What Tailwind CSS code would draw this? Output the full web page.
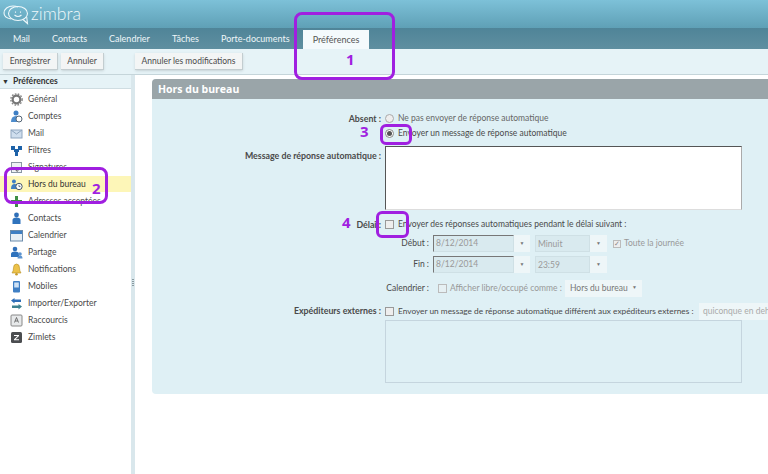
<!DOCTYPE html>
<html lang="fr">
<head>
<meta charset="utf-8">
<script src="https://cdn.jsdelivr.net/npm/@tailwindcss/browser@4"></script>
<title>Zimbra</title>
</head>
<body class="font-['Lato',sans-serif] text-[8.5px] text-[#4a4a4a] bg-white">
<div class="relative w-[768px] h-[474px] overflow-hidden">

  <!-- logo bar -->
  <header class="h-[28px] flex items-center pl-[3px] bg-gradient-to-b from-[#7dc1d8] to-[#5fa0b6]">
    <svg width="27" height="24" viewBox="0 0 27 24" fill="none" stroke="#eef8fb" stroke-width="1.1">
      <path d="M8 17C3 16 1 13.500 1 11c0-4 4-7 9-7 2 0 4 .5 5 1"/>
      <ellipse cx="15" cy="11.500" rx="9.500" ry="7"/>
      <path d="M12.500 9.500v1.200M17.500 9.500v1.200M11.500 13q3.500 3 7 0"/>
      <path d="M20 17.500l4.500 4-.8-6.500"/>
    </svg>
    <span class="ml-[1px] text-[17.500px] leading-none font-light text-[#eef8fb]">zimbra</span>
  </header>

  <!-- tabs -->
  <nav class="h-[21px] flex items-end pl-[13px] whitespace-nowrap bg-gradient-to-b from-[#4f8498] to-[#5f8fa0] text-[#eef6f9] text-[9px]">
    <a class="w-[39px] h-[21px] leading-[21px]">Mail</a>
    <a class="w-[57px] h-[21px] leading-[21px]">Contacts</a>
    <a class="w-[63px] h-[21px] leading-[21px]">Calendrier</a>
    <a class="w-[49px] h-[21px] leading-[21px]">Tâches</a>
    <a class="w-[82px] h-[21px] leading-[21px]">Porte-documents</a>
    <a class="w-[66px] h-[19px] leading-[19px] text-center bg-[#f4fafc] text-[#555]">Préférences</a>
  </nav>

  <!-- toolbar -->
  <div class="h-[26px] flex items-center pl-[3px] bg-[#e6f3f7] border-b border-[#c5d5da]">
    <button class="w-[55px] h-[17px] bg-[#f3f5f5] border-b border-r border-[#c3cdd0] shadow-sm">Enregistrer</button>
    <button class="ml-[3px] w-[43px] h-[17px] bg-[#f3f5f5] border-b border-r border-[#c3cdd0] shadow-sm">Annuler</button>
    <button class="ml-[31px] w-[108px] h-[17px] bg-[#f3f5f5] border-b border-r border-[#c3cdd0] shadow-sm">Annuler les modifications</button>
  </div>

  <div class="flex h-[399px]">
    <!-- sidebar -->
    <aside class="w-[131px] shrink-0 bg-white">
      <div class="h-[14px] flex items-center pl-[2px] bg-[#e6f3f7] border-b border-[#cfdde2] font-bold text-[#333]">
        <span class="text-[7px] mr-[4px]">▼</span>Préférences
      </div>
      <ul class="pt-[2px]">
        <li class="h-[17px] flex items-center pl-[10px] gap-[5px]">
          <svg class="w-[13px] h-[13px]" viewBox="0 0 13 13"><circle cx="6.500" cy="6.500" r="3.800" fill="none" stroke="#777" stroke-width="2.200"/><circle cx="6.500" cy="6.500" r="5.600" fill="none" stroke="#888" stroke-width="1.500" stroke-dasharray="1.600 1.400"/></svg>Général
        </li>
        <li class="h-[17px] flex items-center pl-[10px] gap-[5px]">
          <svg class="w-[13px] h-[13px]" viewBox="0 0 13 13"><circle cx="6" cy="3" r="2.500" fill="#3f7fc4"/><path d="M1 12q0-6 5-6t5 6z" fill="#4d8ccc"/><circle cx="9" cy="9" r="3" fill="#fff" stroke="#567"/></svg>Comptes
        </li>
        <li class="h-[16px] flex items-center pl-[10px] gap-[5px]">
          <svg class="w-[13px] h-[13px]" viewBox="0 0 13 13"><rect x="1" y="3" width="11" height="8" fill="#cfdeee" stroke="#8fa6bf"/><path d="M1 3l5.500 4L12 3" fill="none" stroke="#8fa6bf"/></svg>Mail
        </li>
        <li class="h-[18px] flex items-center pl-[10px] gap-[5px]">
          <svg class="w-[13px] h-[13px]" viewBox="0 0 13 13"><path d="M1 2h4v3h3V2h4v4H9v2H8v4H5V8H4V6H1z" fill="#1d62a8"/></svg>Filtres
        </li>
        <li class="h-[17px] flex items-center pl-[10px] gap-[5px]">
          <svg class="w-[13px] h-[13px]" viewBox="0 0 13 13"><rect x="1.500" y="1.500" width="10" height="10" fill="#eef2f5" stroke="#8a97a3"/><path d="M3 9q2-3 3 0t3-1" fill="none" stroke="#555"/></svg>Signatures
        </li>
        <li class="h-[16px] flex items-center pl-[10px] gap-[5px] bg-[#fdf6b8] text-[#333]">
          <svg class="w-[13px] h-[13px]" viewBox="0 0 13 13"><path d="M4 1.500a2 2 0 1 1-.1 0zM1 11q0-5 3.500-5T8 11z" fill="#3f7fc4"/><circle cx="9" cy="8.500" r="3.200" fill="#fff" stroke="#456"/><path d="M9 6.800v1.800h1.500" fill="none" stroke="#456" stroke-width=".8"/></svg>Hors du bureau
        </li>
        <li class="h-[18px] flex items-center pl-[10px] gap-[5px]">
          <svg class="w-[13px] h-[13px]" viewBox="0 0 13 13"><path d="M5 1h3v4h4v3H8v4H5V8H1V5h4z" fill="#3f8f45"/></svg>Adresses acceptées
        </li>
        <li class="h-[17px] flex items-center pl-[10px] gap-[5px]">
          <svg class="w-[13px] h-[13px]" viewBox="0 0 13 13"><circle cx="6.500" cy="3" r="2.400" fill="#2f6fb8"/><path d="M2.500 12V8q0-2.500 4-2.500t4 2.500v4z" fill="#2f73bd"/></svg>Contacts
        </li>
        <li class="h-[17px] flex items-center pl-[10px] gap-[5px]">
          <svg class="w-[13px] h-[13px]" viewBox="0 0 13 13"><rect x=".5" y="1.500" width="12" height="10.500" fill="#e8eff6" stroke="#6b8bab"/><rect x="1" y="2" width="11" height="3" fill="#3f7fc4"/></svg>Calendrier
        </li>
        <li class="h-[17px] flex items-center pl-[10px] gap-[5px]">
          <svg class="w-[13px] h-[13px]" viewBox="0 0 13 13"><circle cx="5" cy="3" r="2.300" fill="#2f6fb8"/><path d="M1 11V8q0-2.500 4-2.500T9 8v3z" fill="#2f73bd"/><circle cx="10" cy="8" r="1.800" fill="#5c93cf"/><path d="M7.500 12.500q0-3 2.500-3t2.500 3z" fill="#5c93cf"/></svg>Partage
        </li>
        <li class="h-[17px] flex items-center pl-[10px] gap-[5px]">
          <svg class="w-[13px] h-[13px]" viewBox="0 0 13 13"><path d="M6.500 1q3 0 3 4 0 3 1.500 5H2Q3.500 8 3.500 5q0-4 3-4z" fill="#edc24a" stroke="#b58f22" stroke-width=".6"/><circle cx="6.500" cy="11.300" r="1.300" fill="#c79a26"/></svg>Notifications
        </li>
        <li class="h-[17px] flex items-center pl-[10px] gap-[5px]">
          <svg class="w-[13px] h-[13px]" viewBox="0 0 13 13"><rect x="3" y="1" width="7" height="11.500" rx="1" fill="#3f7fc4"/><rect x="4.200" y="2.500" width="4.600" height="5" fill="#cfe2f5"/></svg>Mobiles
        </li>
        <li class="h-[17px] flex items-center pl-[10px] gap-[5px]">
          <svg class="w-[13px] h-[13px]" viewBox="0 0 13 13"><path d="M1 3.500L4.500 1v1.500H11v2.500H4.500V6.500z" fill="#2f6fb8"/><path d="M12 9.500L8.500 7v1.500H2V11h6.500v1.500z" fill="#3d8290"/></svg>Importer/Exporter
        </li>
        <li class="h-[17px] flex items-center pl-[10px] gap-[5px]">
          <svg class="w-[13px] h-[13px]" viewBox="0 0 13 13"><rect x="1" y="1" width="11" height="11" rx="1" fill="#e7e9ea" stroke="#888"/><path d="M4.500 8.500L6.500 3.500l2 5M5.200 7h2.600" fill="none" stroke="#555" stroke-width=".8"/></svg>Raccourcis
        </li>
        <li class="h-[17px] flex items-center pl-[10px] gap-[5px]">
          <svg class="w-[13px] h-[13px]" viewBox="0 0 13 13"><rect x="1" y="1" width="11" height="11" rx="1.500" fill="#4b4d50"/><path d="M4 4h5v1L5.500 8.200H9v1H4v-1L7.500 5H4z" fill="#fff"/></svg>Zimlets
        </li>
      </ul>
    </aside>

    <!-- sash -->
    <div class="w-[4px] shrink-0 bg-[#d9e7ec] flex flex-col justify-center items-center gap-[1px] pt-[16px]">
      <i class="w-[2px] h-[1px] bg-[#8a9aa0]"></i><i class="w-[2px] h-[1px] bg-[#8a9aa0]"></i><i class="w-[2px] h-[1px] bg-[#8a9aa0]"></i><i class="w-[2px] h-[1px] bg-[#8a9aa0]"></i>
    </div>

    <!-- content -->
    <main class="flex-1 min-w-0 pl-[17px] pt-[4px] bg-white">
      <section class="w-[640px] h-[315px] rounded-l-[4px] overflow-hidden bg-[#dff0f5]">
        <h2 class="h-[20px] pl-[6px] leading-[20px] bg-[#9aa5a9] text-white text-[10.500px] font-['Open_Sans',sans-serif] font-bold">Hors du bureau</h2>

        <div class="pt-[12px] grid grid-cols-[229px_1fr] gap-x-[4px]">
          <div class="h-[15px] leading-[15px] text-right text-[8.800px] font-bold">Absent :</div>
          <label class="h-[15px] flex items-center gap-[4px] text-[#666]"><i class="w-[9px] h-[9px] rounded-full border border-[#aaa] bg-[#eee]"></i>Ne pas envoyer de réponse automatique</label>

          <div></div>
          <label class="h-[15px] flex items-center gap-[4px]"><i class="w-[9px] h-[9px] rounded-full border border-[#888] bg-white flex items-center justify-center"><b class="w-[5px] h-[5px] rounded-full bg-[#555]"></b></i>Envoyer un message de réponse automatique</label>

          <div class="pt-[2px] text-right text-[8.800px] font-bold leading-[15px] mt-[5px]">Message de réponse automatique :</div>
          <div class="mt-[5px] w-[357px] h-[64px] bg-white border border-t-[#555] border-l-[#555] border-r-[#aaa] border-b-[#ddd]"></div>

          <div class="mt-[7px] h-[15px] leading-[15px] text-right text-[8.800px] font-bold">Délai :</div>
          <label class="mt-[7px] h-[15px] flex items-center gap-[4px]"><i class="w-[9px] h-[9px] border border-[#999] bg-[#eee]"></i>Envoyer des réponses automatiques pendant le délai suivant :</label>

          <div class="col-span-2 h-[21px] mt-[1px] flex items-center whitespace-nowrap">
            <span class="w-[277px] text-right">Début :</span>
            <span class="ml-[4px] w-[81px] h-[17px] leading-[15px] pl-[2px] text-[#999] bg-[#d9eaef] border border-t-[#777] border-l-[#777] border-r-[#cfe0e5] border-b-[#cfe0e5]">8/12/2014</span>
            <span class="w-[16px] h-[17px] flex items-center justify-center bg-[#eef6f8] text-[#777] text-[5px]">▼</span>
            <span class="ml-[5px] w-[55px] h-[17px] leading-[17px] pl-[2px] text-[#999] bg-[#d9eaef] border border-[#cfe0e5]">Minuit</span>
            <span class="w-[17px] h-[17px] flex items-center justify-center bg-[#eef6f8] text-[#777] text-[5px]">▼</span>
            <span class="ml-[6px] w-[8px] h-[8px] flex items-center justify-center border border-[#bbb] bg-[#eee] text-[#888] text-[7px]">✓</span>
            <span class="ml-[3px] text-[#999]">Toute la journée</span>
          </div>

          <div class="col-span-2 h-[21px] flex items-center whitespace-nowrap">
            <span class="w-[277px] text-right">Fin :</span>
            <span class="ml-[4px] w-[81px] h-[17px] leading-[15px] pl-[2px] text-[#999] bg-[#d9eaef] border border-t-[#777] border-l-[#777] border-r-[#cfe0e5] border-b-[#cfe0e5]">8/12/2014</span>
            <span class="w-[16px] h-[17px] flex items-center justify-center bg-[#eef6f8] text-[#777] text-[5px]">▼</span>
            <span class="ml-[5px] w-[55px] h-[17px] leading-[17px] pl-[2px] text-[#999] bg-[#d9eaef] border border-[#cfe0e5]">23:59</span>
            <span class="w-[17px] h-[17px] flex items-center justify-center bg-[#eef6f8] text-[#777] text-[5px]">▼</span>
          </div>

          <div class="col-span-2 h-[18px] mt-[4px] flex items-center whitespace-nowrap">
            <span class="w-[277px] text-right">Calendrier :</span>
            <i class="ml-[9px] w-[9px] h-[9px] border border-[#bbb] bg-[#e6f0f3]"></i>
            <span class="ml-[3px] w-[115px] text-[#999]">Afficher libre/occupé comme :</span>
            <span class="w-[77px] h-[17px] flex items-center justify-between px-[5px] bg-[#eef6f8] text-[#777]">Hors du bureau<b class="text-[5px] font-normal">▼</b></span>
          </div>

          <div class="mt-[6px] h-[17px] leading-[15px] text-right text-[8.800px] font-bold">Expéditeurs externes :</div>
          <div class="mt-[6px] h-[17px] flex items-center whitespace-nowrap">
            <i class="shrink-0 w-[9px] h-[9px] border border-[#999] bg-[#eee]"></i>
            <span class="ml-[4px] w-[301px] text-[8.300px]">Envoyer un message de réponse automatique différent aux expéditeurs externes :</span>
            <span class="pl-[4px] w-[70px] h-[17px] leading-[17px] bg-[#eef6f8] text-[#aaa]">quiconque en dehors</span>
          </div>

          <div></div>
          <div class="w-[357px] h-[63px] border border-[#c5d5de]"></div>
        </div>
      </section>
    </main>
  </div>

  <!-- callouts drawn over the screenshot -->
  <div class="absolute left-[294px] top-[12px] w-[101px] h-[68px] rounded-[8px] border-[3px] border-[#a01fe0]"></div>
  <span class="absolute left-[346px] top-[52px] font-['Open_Sans',sans-serif] text-[15px] leading-[14px] font-bold text-[#a01fe0]">1</span>
  <div class="absolute left-[4px] top-[167px] w-[104px] h-[37px] rounded-[8px] border-[3px] border-[#a01fe0]"></div>
  <span class="absolute left-[92px] top-[181px] font-['Open_Sans',sans-serif] text-[15px] leading-[14px] font-bold text-[#a01fe0]">2</span>
  <div class="absolute left-[380px] top-[124px] w-[32px] h-[21px] rounded-[6px] border-[3px] border-[#a01fe0]"></div>
  <span class="absolute left-[360px] top-[124px] font-['Open_Sans',sans-serif] text-[15px] leading-[14px] font-bold text-[#a01fe0]">3</span>
  <div class="absolute left-[376px] top-[211px] w-[33px] h-[27px] rounded-[6px] border-[3px] border-[#a01fe0]"></div>
  <span class="absolute left-[342px] top-[215px] font-['Open_Sans',sans-serif] text-[15px] leading-[14px] font-bold text-[#a01fe0]">4</span>
</div>
</body>
</html>
